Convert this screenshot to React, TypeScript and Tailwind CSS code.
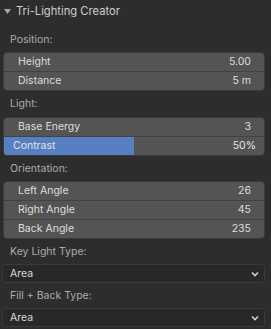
import React from "react"

type Field = { label: string; value: string }

const font = { fontFamily: 'Inter, "DejaVu Sans", sans-serif' }

const SectionLabel: React.FC<{ text: string; h: string }> = ({ text, h }) => (
  <div className={`flex items-center pl-[10px] text-[10.5px] text-[#acacac] ${h}`}>{text}</div>
)

const FieldBox: React.FC<{ fields: Field[] }> = ({ fields }) => (
  <div className="ml-[3px] mr-[6px] rounded-[4px] border border-[#3a3a3a] bg-[#545454] overflow-hidden">
    {fields.map((f, i) => (
      <div key={f.label}>
        {i > 0 && <div className="h-px bg-[#424242]" />}
        <div className="flex h-[18px] items-center justify-between pl-[14px] pr-[13px] text-[10.5px] text-[#dedede]">
          <span>{f.label}</span>
          <span>{f.value}</span>
        </div>
      </div>
    ))}
  </div>
)

const Dropdown: React.FC<{ value: string }> = ({ value }) => (
  <div className="ml-[2px] mr-[6px] flex h-[19px] items-center justify-between rounded-[4px] border border-[#3a3a3a] bg-[#282828] pl-[7px] pr-[5px] text-[10.5px] text-[#d8d8d8]">
    <span>{value}</span>
    <svg width="8" height="6" viewBox="0 0 8 6" fill="none" stroke="#cfcfcf" strokeWidth="1.6">
      <path d="M1 1.5 L4 4.5 L7 1.5" />
    </svg>
  </div>
)

export default function App() {
  return (
    <div className="h-[329px] w-[271px] overflow-hidden bg-[#2d2d2d]" style={font}>
      <div className="flex h-[22px] items-center gap-[5px] pl-[4px]">
        <svg width="7" height="5" viewBox="0 0 7 5">
          <path d="M0 0 L7 0 L3.5 5 Z" fill="#a8a8a8" />
        </svg>
        <span className="text-[11.2px] text-[#cdcdcd]">Tri-Lighting Creator</span>
      </div>

      <SectionLabel text="Position:" h="mt-[6px] h-[24px]" />
      <FieldBox
        fields={[
          { label: "Height", value: "5.00" },
          { label: "Distance", value: "5 m" },
        ]}
      />

      <SectionLabel text="Light:" h="h-[26px]" />
      <div className="ml-[3px] mr-[6px] rounded-[4px] border border-[#3a3a3a] bg-[#545454] overflow-hidden">
        <div className="flex h-[18px] items-center justify-between pl-[14px] pr-[13px] text-[10.5px] text-[#dedede]">
          <span>Base Energy</span>
          <span>3</span>
        </div>
        <div className="h-px bg-[#424242]" />
        <div className="relative h-[18px] text-[10.5px] text-[#e4e4e4]">
          <div className="absolute inset-y-0 left-0 w-[50%] bg-[#5680c2]" />
          <div className="relative flex h-full items-center justify-between pl-[9px] pr-[8px]">
            <span>Contrast</span>
            <span>50%</span>
          </div>
        </div>
      </div>

      <SectionLabel text="Orientation:" h="h-[25px]" />
      <FieldBox
        fields={[
          { label: "Left Angle", value: "26" },
          { label: "Right Angle", value: "45" },
          { label: "Back Angle", value: "235" },
        ]}
      />

      <SectionLabel text="Key Light Type:" h="h-[25px]" />
      <Dropdown value="Area" />

      <SectionLabel text="Fill + Back Type:" h="h-[25px]" />
      <Dropdown value="Area" />
    </div>
  )
}
